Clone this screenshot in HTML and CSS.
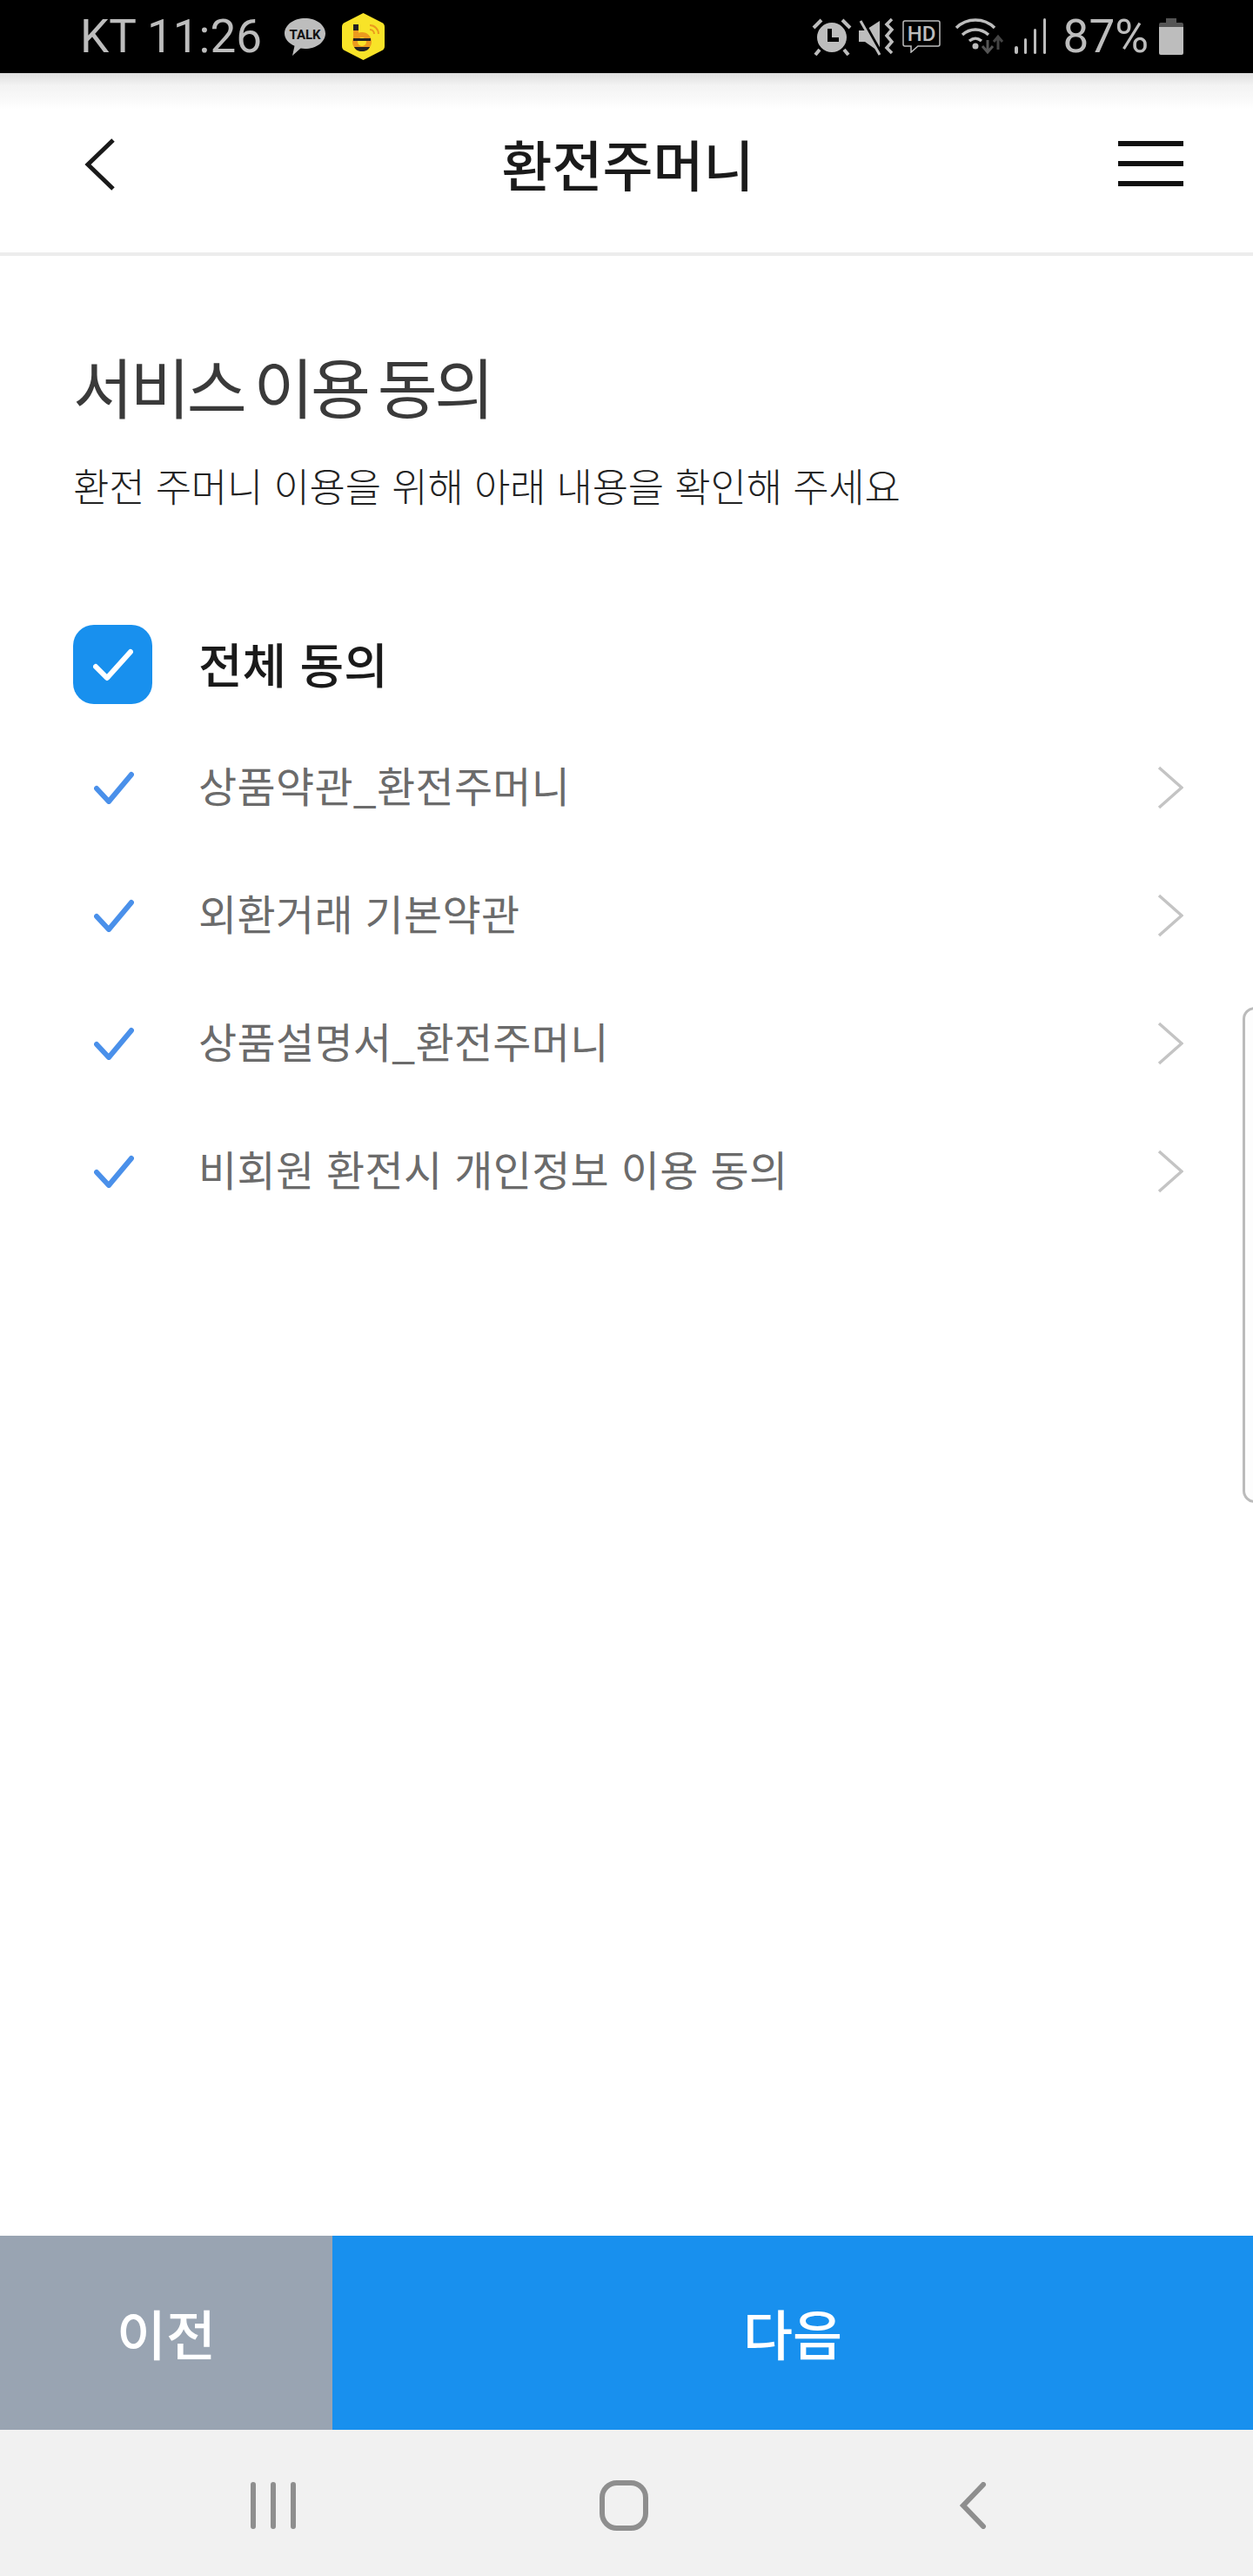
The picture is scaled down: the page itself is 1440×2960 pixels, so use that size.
FILE: index.html
```html
<!DOCTYPE html>
<html lang="ko">
<head>
	<meta charset="utf-8">
	<title>환전주머니</title>
	<link rel="stylesheet" href="styles.css">
</head>
<body>
	<div id="phone">
		<div id="statusBar">
			<div class="statusSide">
				<span class="carrier">KT 11:26</span>
				<svg class="talkIcon" viewBox="0 0 47 43" width="47" height="43">
					<path d="M23.500 0C36.500 0 47 7.800 47 17.500S36.500 35 23.500 35c-2 0-3.500-.1-5-.4L9 43l2.500-11.300C4.500 28.500 0 23.500 0 17.500 0 7.800 10.500 0 23.500 0z" fill="#bdbdbd"/>
					<text x="23.500" y="23.500" class="talkText" text-anchor="middle">TALK</text>
				</svg>
				<svg class="beeIcon" viewBox="0 0 49 54" width="49" height="54">
					<path d="M24.500 0L46 11c2 1 3 2.500 3 5v22c0 2.500-1 4-3 5L24.500 54 3 43c-2-1-3-2.500-3-5V16c0-2.500 1-4 3-5z" fill="#f8e328"/>
					<rect x="13" y="13" width="6" height="7" fill="#222"/>
					<rect x="13" y="20" width="6" height="8" fill="#eb9a1e"/>
					<circle cx="23" cy="33" r="8" fill="none" stroke="#eb9a1e" stroke-width="6"/>
					<path d="M13 29h20v3H13zM14 39h18c-1 3-5 5-9 5s-8-2-9-5z" fill="#222"/>
					<path d="M32 19a5 5 0 0 1 5 5M32 14a10 10 0 0 1 10 10" fill="none" stroke="#eb9a1e" stroke-width="2"/>
				</svg>
			</div>
			<div class="statusSide">
				<svg class="statusIcon alarm" viewBox="0 0 46 44" width="46" height="44">
					<circle cx="23" cy="23" r="17" fill="#bdbdbd"/>
					<path d="M18 13h5v10h8v5H18z" fill="#000"/>
					<path d="M2 12L11 3M44 12L35 3M9 37l-5 6M37 37l5 6" stroke="#bdbdbd" stroke-width="4" fill="none"/>
				</svg>
				<svg class="statusIcon mute" viewBox="0 0 42 44" width="42" height="44">
					<path d="M0 15h7L24 4v36L7 28H0z" fill="#bdbdbd"/>
					<path d="M3 1L26 42" stroke="#000" stroke-width="4"/>
					<path d="M2 4L24 43" stroke="#bdbdbd" stroke-width="3"/>
					<path d="M38 2l-6 6 6 6-6 7 6 7-6 7 6 6" stroke="#bdbdbd" stroke-width="3.500" fill="none"/>
				</svg>
				<svg class="statusIcon hdIcon" viewBox="0 0 44 38" width="44" height="38">
					<path d="M3 1h38a2 2 0 0 1 2 2v25a2 2 0 0 1-2 2H18l-8 7v-7H3a2 2 0 0 1-2-2V3a2 2 0 0 1 2-2z" fill="none" stroke="#bdbdbd" stroke-width="1.500"/>
					<text x="22" y="24" class="hdText" text-anchor="middle">HD</text>
				</svg>
				<svg class="statusIcon wifi" viewBox="0 0 58 44" width="58" height="44">
					<path d="M2 12C14 0 34 0 46 12M9 20c9-8 21-8 30 0M17 27c5-4 9-4 14 0" fill="none" stroke="#bdbdbd" stroke-width="3.500"/>
					<circle cx="24" cy="33" r="3.500" fill="#bdbdbd"/>
					<path d="M38 26v13M32 33l6 7 6-7" fill="none" stroke="#555" stroke-width="3"/>
					<path d="M50 37V22M45 28l5-6 5 6" fill="none" stroke="#444" stroke-width="3"/>
				</svg>
				<svg class="statusIcon signal" viewBox="0 0 38 42" width="38" height="42">
					<rect x="1" y="32" width="4" height="9" rx="2" fill="#bdbdbd"/>
					<rect x="12" y="23" width="3" height="18" rx="1.500" fill="#bdbdbd"/>
					<rect x="23" y="12" width="3" height="29" rx="1.500" fill="#bdbdbd"/>
					<rect x="34" y="0" width="3" height="41" rx="1.500" fill="#bdbdbd"/>
				</svg>
				<span class="battery">87%</span>
				<svg class="statusIcon batteryIcon" viewBox="0 0 28 42" width="28" height="42">
					<path d="M8 0h12v5h6a2 2 0 0 1 2 2v7H0V7a2 2 0 0 1 2-2h6z" fill="#555"/>
					<path d="M0 10h28v30a2 2 0 0 1-2 2H2a2 2 0 0 1-2-2z" fill="#bdbdbd"/>
				</svg>
			</div>
		</div>

		<div id="header">
			<a class="headerBack" href="javascript:;">
				<svg viewBox="0 0 36 60" width="36" height="60"><path d="M33 2L4 30l29 28" fill="none" stroke="#1a1a1a" stroke-width="5"/></svg>
			</a>
			<h1>환전주머니</h1>
			<a class="headerMenu" href="javascript:;"><i></i><i></i><i></i></a>
		</div>

		<div id="content">
			<h2>서비스 이용 동의</h2>
			<p class="desc">환전 주머니 이용을 위해 아래 내용을 확인해 주세요</p>

			<div class="allAgree">
				<span class="checkBox">
					<svg viewBox="0 0 46 38" width="46" height="38"><path d="M3 21l13 13L43 4" fill="none" stroke="#fff" stroke-width="6" stroke-linecap="round" stroke-linejoin="round"/></svg>
				</span>
				<strong>전체 동의</strong>
			</div>

			<ul class="termList">
				<li>
					<svg class="termCheck" viewBox="0 0 46 38" width="46" height="38"><path d="M3 20l14 15L43 4" fill="none" stroke="#4a90ea" stroke-width="6" stroke-linecap="round" stroke-linejoin="round"/></svg>
					<span>상품약관_환전주머니</span>
					<svg class="termArrow" viewBox="0 0 30 50" width="30" height="50"><path d="M2 2l26 23L2 48" fill="none" stroke="#c4c4c4" stroke-width="3.500"/></svg>
				</li>
				<li>
					<svg class="termCheck" viewBox="0 0 46 38" width="46" height="38"><path d="M3 20l14 15L43 4" fill="none" stroke="#4a90ea" stroke-width="6" stroke-linecap="round" stroke-linejoin="round"/></svg>
					<span>외환거래 기본약관</span>
					<svg class="termArrow" viewBox="0 0 30 50" width="30" height="50"><path d="M2 2l26 23L2 48" fill="none" stroke="#c4c4c4" stroke-width="3.500"/></svg>
				</li>
				<li>
					<svg class="termCheck" viewBox="0 0 46 38" width="46" height="38"><path d="M3 20l14 15L43 4" fill="none" stroke="#4a90ea" stroke-width="6" stroke-linecap="round" stroke-linejoin="round"/></svg>
					<span>상품설명서_환전주머니</span>
					<svg class="termArrow" viewBox="0 0 30 50" width="30" height="50"><path d="M2 2l26 23L2 48" fill="none" stroke="#c4c4c4" stroke-width="3.500"/></svg>
				</li>
				<li>
					<svg class="termCheck" viewBox="0 0 46 38" width="46" height="38"><path d="M3 20l14 15L43 4" fill="none" stroke="#4a90ea" stroke-width="6" stroke-linecap="round" stroke-linejoin="round"/></svg>
					<span>비회원 환전시 개인정보 이용 동의</span>
					<svg class="termArrow" viewBox="0 0 30 50" width="30" height="50"><path d="M2 2l26 23L2 48" fill="none" stroke="#c4c4c4" stroke-width="3.500"/></svg>
				</li>
			</ul>
			<div id="edgePanel"></div>
		</div>

		<div id="buttons">
			<a class="btnPrev" href="javascript:;">이전</a>
			<a class="btnNext" href="javascript:;">다음</a>
		</div>

		<div id="navBar">
			<svg class="navRecent" viewBox="0 0 56 54" width="56" height="54"><path d="M5 3v48M28 3v48M51 3v48" stroke="#8e8e8e" stroke-width="6" stroke-linecap="round" fill="none"/></svg>
			<svg class="navHome" viewBox="0 0 56 58" width="56" height="58"><rect x="3" y="3" width="50" height="52" rx="17" fill="none" stroke="#8e8e8e" stroke-width="6"/></svg>
			<svg class="navBack" viewBox="0 0 32 54" width="32" height="54"><path d="M28 3L5 27l23 24" stroke="#8e8e8e" stroke-width="6" stroke-linecap="round" fill="none"/></svg>
		</div>
	</div>
</body>
</html>
```

FILE: styles.css
```css
*{margin: 0;padding: 0;}
ul{list-style: none;}
a{text-decoration: none;color: inherit;}
i{display: block;}
body {
	background: #fff;
	font-family: "Noto Sans CJK KR", "Noto Sans", sans-serif;
}
#phone {
	position: relative;
	width: 1440px;
	height: 2960px;
	display: flex;
	flex-direction: column;
	overflow: hidden;
}

/* status bar */
#statusBar {
	height: 84px;
	flex: none;
	background: #000;
	color: #bdbdbd;
	display: flex;
	justify-content: space-between;
	align-items: center;
	padding: 0 80px 0 92px;
	font-family: Roboto, "Liberation Sans", sans-serif;
	font-size: 53px;
}
.statusSide {
	display: flex;
	align-items: center;
}
.carrier {
	line-height: 84px;
	margin-right: 26px;
}
.talkIcon {
	margin-right: 19px;
}
.talkText {
	font: 700 15px "Roboto", sans-serif;
	fill: #111;
}
.hdText {
	font: 500 24px "Roboto", sans-serif;
	fill: #bdbdbd;
}
.statusIcon {
	margin-right: 8px;
}
.wifi {
	margin: 0 10px 0 8px;
}
.signal {
	margin-right: 19px;
}
.battery {
	line-height: 84px;
	margin-right: 12px;
}
.batteryIcon {
	margin-right: 0;
}

/* header */
#header {
	height: 210px;
	flex: none;
	box-sizing: border-box;
	display: grid;
	grid-template-columns: 1fr auto 1fr;
	align-items: center;
	padding: 0 80px 0 97px;
	background: linear-gradient(#dedede, #f3f3f3 14px, #fafafa 32px, #fff 42px);
	border-bottom: 4px solid #ececec;
}
#header h1 {
	font-size: 63px;
	font-weight: 500;
	color: #1a1a1a;
	line-height: 88px;
	padding-right: 14px;
}
.headerBack {
	display: block;
	height: 60px;
	padding-top: 4px;
}
.headerBack svg {
	display: block;
}
.headerMenu {
	justify-self: end;
	width: 75px;
	padding-top: 2px;
}
.headerMenu i {
	height: 6px;
	background: #111;
	margin-bottom: 17px;
}
.headerMenu i:last-child {
	margin-bottom: 0;
}

/* content */
#content {
	flex: 1;
	padding: 0 80px 0 84px;
}
#content h2 {
	font-size: 75px;
	font-weight: 400;
	letter-spacing: -3.6px;
	word-spacing: -6px;
	color: #3a3a3a;
	line-height: 106px;
	margin-top: 96px;
}
.desc {
	font-size: 45px;
	font-weight: 300;
	letter-spacing: -0.25px;
	color: #222;
	line-height: 64px;
	margin-top: 30px;
}
.allAgree {
	display: flex;
	align-items: center;
	margin-top: 126px;
}
.checkBox {
	width: 91px;
	height: 91px;
	border-radius: 24px;
	background: #1890ee;
	display: flex;
	align-items: center;
	justify-content: center;
	margin-right: 53px;
}
.allAgree strong {
	font-size: 55px;
	font-weight: 500;
	color: #1a1a1a;
	line-height: 91px;
	margin-bottom: 4px;
}
.termList {
	margin-top: 20px;
}
.termList li {
	height: 147px;
	display: flex;
	align-items: center;
	color: #6b6b6b;
	font-size: 48px;
	font-weight: 400;
	letter-spacing: 0.3px;
}
.termCheck {
	flex: none;
	margin: 0 74px 0 24px;
}
.termList span {
	flex: 1;
	margin-bottom: 7px;
}
.termArrow {
	flex: none;
}
#edgePanel {
	position: absolute;
	left: 1428px;
	top: 1157px;
	width: 30px;
	height: 570px;
	box-sizing: border-box;
	background: #fdfdfd;
	border: 3px solid #bbb;
	border-radius: 14px;
}

/* bottom buttons */
#buttons {
	height: 223px;
	flex: none;
	display: flex;
	color: #fff;
	font-size: 62px;
	font-weight: 500;
	line-height: 223px;
	text-align: center;
}
.btnPrev {
	width: 382px;
	background: #99a4b2;
}
.btnNext {
	flex: 1;
	background: #1890ee;
}

/* nav bar */
#navBar {
	height: 168px;
	flex: none;
	box-sizing: border-box;
	background: #f1f1f1;
	display: flex;
	align-items: center;
	padding: 6px 0 0 286px;
}
.navRecent {
	margin-right: 347px;
}
.navHome {
	margin-right: 357px;
}
```
